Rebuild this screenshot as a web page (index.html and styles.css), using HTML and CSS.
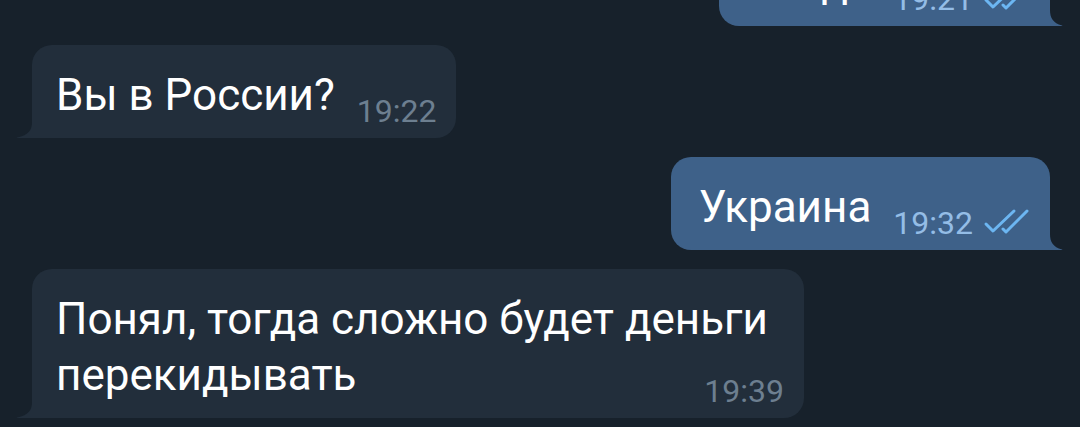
FILE: index.html
```html
<!DOCTYPE html>
<html lang="ru">
<head>
    <meta charset="UTF-8">
    <meta name="viewport" content="width=device-width, initial-scale=1.0">
    <title>Чат</title>
    <link rel="stylesheet" href="styles.css">
</head>
<body>
    <div class="chat">
        <div class="msg out">
            <span class="text">Нигде</span>
            <span class="meta"><span class="time">19:21</span><svg class="ticks" viewBox="0 0 46 24"><path d="M2 14 L9 21 L30 1"/><path d="M19 19 L22 22 L43 1"/></svg></span>
            <svg class="tail" viewBox="0 0 14 22"><path d="M0 0 H1 V6 C1 14 4 19 13 21.5 Q14 22 13 22 H0 Z"/></svg>
        </div>

        <div class="msg in">
            <span class="text">Вы в России?</span>
            <span class="meta"><span class="time">19:22</span></span>
            <svg class="tail" viewBox="0 0 17 22"><path d="M17 0 H16 V6 C16 14 13 19 1 21.5 Q0 22 1 22 H17 Z"/></svg>
        </div>

        <div class="msg out">
            <span class="text">Украина</span>
            <span class="meta"><span class="time">19:32</span><svg class="ticks" viewBox="0 0 46 24"><path d="M2 14 L9 21 L30 1"/><path d="M19 19 L22 22 L43 1"/></svg></span>
            <svg class="tail" viewBox="0 0 14 22"><path d="M0 0 H1 V6 C1 14 4 19 13 21.5 Q14 22 13 22 H0 Z"/></svg>
        </div>

        <div class="msg in">
            <span class="text">Понял, тогда сложно будет деньги перекидывать</span>
            <span class="meta"><span class="time">19:39</span></span>
            <svg class="tail" viewBox="0 0 17 22"><path d="M17 0 H16 V6 C16 14 13 19 1 21.5 Q0 22 1 22 H17 Z"/></svg>
        </div>
    </div>
</body>
</html>
```

FILE: styles.css
```css
body {
    margin: 0;
    background-color: #17212b;
    font-family: Roboto, "Liberation Sans", sans-serif;
    overflow: hidden;
}
.chat {
    display: flex;
    flex-direction: column;
    gap: 19px;
    margin-top: -67px;
    padding: 0 30px 0 32px;
}
.msg {
    position: relative;
    display: flow-root;
    box-sizing: border-box;
    max-width: 772px;
    padding: 22px 20px 11px 24px;
    border-radius: 20px;
    font-size: 44px;
    line-height: 56px;
    color: #fff;
}
.msg.in {
    align-self: flex-start;
    background-color: #222e3b;
    border-bottom-left-radius: 0;
}
.msg.out {
    align-self: flex-end;
    padding-left: 28px;
    background-color: #3e6189;
    border-bottom-right-radius: 0;
}
.meta {
    float: right;
    display: flex;
    align-items: center;
    gap: 11px;
    margin: 28px 0 0 22px;
    font-size: 32px;
    line-height: 32px;
}
.in .time {
    color: #6d7f90;
}
.out .time {
    color: #94bde6;
}
.ticks {
    width: 46px;
    height: 24px;
    margin-bottom: 3px;
    overflow: visible;
    fill: none;
    stroke: #6cb6f2;
    stroke-width: 3;
    stroke-linecap: round;
    stroke-linejoin: round;
}
.tail {
    position: absolute;
    bottom: 0;
    height: 22px;
}
.in .tail {
    left: -16px;
    width: 17px;
    fill: #222e3b;
}
.out .tail {
    right: -13px;
    width: 14px;
    fill: #3e6189;
}
```
